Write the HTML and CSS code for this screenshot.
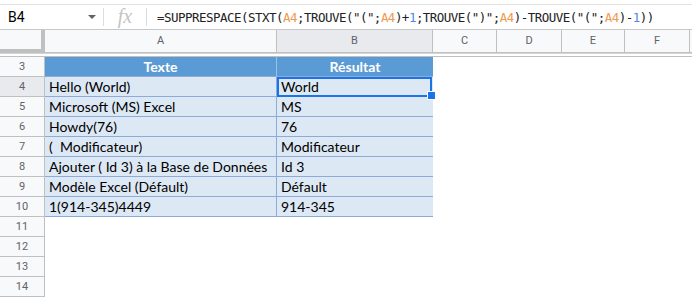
FILE: index.html
```html
<!DOCTYPE html>
<html lang="fr">
<head>
    <meta charset="UTF-8">
    <title>SUPPRESPACE STXT TROUVE</title>
    <link rel="stylesheet" href="styles.css">
</head>
<body>
    <!-- barre de formule -->
    <div class="toolbar">
        <div class="namebox"><span>B4</span><span class="caret"></span></div>
        <div class="fx">fx</div>
        <div class="formula">=SUPPRESPACE(STXT(<span class="ref">A4</span>;TROUVE("(";<span class="ref">A4</span>)+<span class="num">1</span>;TROUVE(")";<span class="ref">A4</span>)-TROUVE("(";<span class="ref">A4</span>)-<span class="num">1</span>))</div>
    </div>

    <!-- grille -->
    <div class="sheet">
        <div class="row head">
            <div class="corner"></div>
            <div class="colh">A</div>
            <div class="colh sel">B</div>
            <div class="colh">C</div>
            <div class="colh">D</div>
            <div class="colh">E</div>
            <div class="colh">F</div>
            <div class="colh last"></div>
        </div>
        <div class="hidden-rows"></div>

        <div class="row">
            <div class="rowh">3</div>
            <div class="cell th a">Texte</div>
            <div class="cell th">Résultat</div>
        </div>
        <div class="row">
            <div class="rowh sel">4</div>
            <div class="cell a">Hello (World)</div>
            <div class="cell sel">World</div>
        </div>
        <div class="row">
            <div class="rowh">5</div>
            <div class="cell a">Microsoft (MS) Excel</div>
            <div class="cell">MS</div>
        </div>
        <div class="row">
            <div class="rowh">6</div>
            <div class="cell a">Howdy(76)</div>
            <div class="cell">76</div>
        </div>
        <div class="row">
            <div class="rowh">7</div>
            <div class="cell a">(&nbsp; Modificateur)</div>
            <div class="cell">Modificateur</div>
        </div>
        <div class="row">
            <div class="rowh">8</div>
            <div class="cell a">Ajouter ( Id 3) à la Base de Données</div>
            <div class="cell">Id 3</div>
        </div>
        <div class="row">
            <div class="rowh">9</div>
            <div class="cell a">Modèle Excel (Défault)</div>
            <div class="cell">Défault</div>
        </div>
        <div class="row">
            <div class="rowh">10</div>
            <div class="cell a">1(914-345)4449</div>
            <div class="cell">914-345</div>
        </div>
        <div class="row"><div class="rowh">11</div></div>
        <div class="row"><div class="rowh">12</div></div>
        <div class="row"><div class="rowh">13</div></div>
        <div class="row"><div class="rowh">14</div></div>
    </div>
</body>
</html>
```

FILE: styles.css
```css
* {
    box-sizing: border-box;
}

body {
    margin: 0;
    width: 692px;
    height: 297px;
    overflow: hidden;
    background-color: white;
    font-family: Roboto, 'Liberation Sans', sans-serif;
    color: #202124;
}

/* barre de formule */
.toolbar {
    display: flex;
    align-items: center;
    height: 26px;
    margin-top: 4px;
    border-top: 1px solid #e3e3e3;
    border-bottom: 1px solid #c7c7c7;
}

.namebox {
    display: flex;
    align-items: center;
    width: 104px;
    height: 18px;
    padding-left: 8px;
    border-right: 1px solid #dadce0;
    font-size: 14px;
    color: #000;
}

.caret {
    margin-left: auto;
    margin-right: 7px;
    border-left: 4px solid transparent;
    border-right: 4px solid transparent;
    border-top: 4px solid #5f6368;
}

.fx {
    width: 43px;
    height: 18px;
    border-right: 1px solid #dadce0;
    text-align: center;
    font-family: 'Liberation Serif', serif;
    font-style: italic;
    font-size: 20px;
    line-height: 17px;
    color: #c4c4c4;
}

.formula {
    padding-left: 10px;
    font-family: 'DejaVu Sans Mono', monospace;
    font-size: 12.5px;
    letter-spacing: -0.53px;
    white-space: nowrap;
    color: #222;
}

.formula .ref {
    color: #f09a4f;
}

.formula .num {
    color: #4f87e6;
}

/* grille */
.row {
    display: grid;
    grid-template-columns: 45px 232px 156px 64px 65px 63px 65px 1fr;
    height: 20px;
}

.row.head {
    height: 23px;
}

.corner {
    background-color: #f8f9fa;
    border-right: 4px solid #c0c0c0;
    border-bottom: 4px solid #c0c0c0;
}

.colh {
    background-color: #f8f9fa;
    border-right: 1px solid #c0c0c0;
    border-bottom: 1px solid #c0c0c0;
    text-align: center;
    font-size: 11px;
    line-height: 22px;
    color: #5f6368;
}

.colh.sel {
    background-color: #e8eaed;
}

.colh.last {
    border-right: none;
}

.hidden-rows {
    height: 4px;
    border-top: 1px solid #d4d4d4;
    border-bottom: 1px solid #c0c0c0;
}

.rowh {
    background-color: #f8f9fa;
    border-right: 1px solid #c0c0c0;
    border-bottom: 1px solid #c0c0c0;
    text-align: center;
    font-size: 11px;
    line-height: 19px;
    color: #5f6368;
}

.rowh.sel {
    background-color: #e8eaed;
}

.cell {
    padding-left: 4px;
    background-color: #dde8f5;
    border-bottom: 1px solid #8eaadb;
    font-family: Lato, 'Liberation Sans', sans-serif;
    font-size: 14px;
    line-height: 19px;
    white-space: nowrap;
    overflow: hidden;
    color: #000;
}

.cell.a {
    border-right: 1px solid #8eaadb;
}

.cell.th {
    padding-left: 0;
    background-color: #5b9bd5;
    border-bottom-color: #8eaadb;
    text-align: center;
    font-weight: bold;
    color: white;
}

.cell.th.a {
    border-right-color: #9cc0e6;
}

/* cellule active */
.cell.sel {
    position: relative;
    overflow: visible;
}

.cell.sel::after {
    content: "";
    position: absolute;
    top: 0;
    left: 0;
    right: 1px;
    bottom: -1px;
    border: 2px solid #1a73e8;
}

.cell.sel::before {
    content: "";
    position: absolute;
    right: -3px;
    bottom: -4px;
    width: 7px;
    height: 7px;
    background-color: #1a73e8;
    border: 1px solid white;
    z-index: 1;
}
```
